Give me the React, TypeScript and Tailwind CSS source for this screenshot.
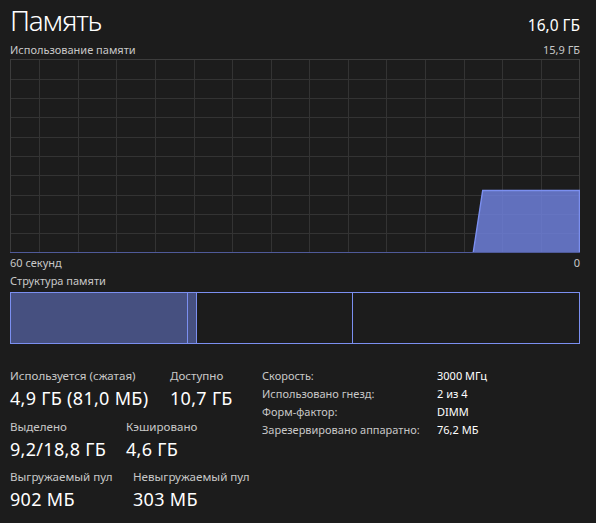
import React from "react";

const font = "font-['Noto_Sans',sans-serif]";

function Graph() {
  const w = 570;
  const h = 194;
  const hLines = Array.from({ length: 9 }, (_, i) => Math.round(0.5 + (i + 1) * 19.3) + 0.5);
  const vLines = Array.from({ length: 14 }, (_, i) => Math.round(29.3 + i * 38.57) + 0.5);
  return (
    <svg width={w} height={h} className="block">
      <rect x="0" y="0" width={w} height={h} fill="#1c1c1c" />
      {hLines.map((y) => (
        <line key={"h" + y} x1="0" x2={w} y1={y} y2={y} stroke="#333333" strokeWidth="1" />
      ))}
      {vLines.map((x) => (
        <line key={"v" + x} x1={x} x2={x} y1="0" y2={h} stroke="#333333" strokeWidth="1" />
      ))}
      <rect x="0.5" y="0.5" width={w - 1} height={h - 1} fill="none" stroke="#3c3c3c" strokeWidth="1" />
      <polygon points={`463.3,193 472.7,131 569.5,131 569.5,193`} fill="#7083e0" fillOpacity="0.82" />
      <line x1="0" x2={w} y1="193.5" y2="193.5" stroke="#4f5a99" strokeWidth="1" />
      <polyline points={`463.3,193 472.7,131.5 569.5,131.5 569.5,193`} fill="none" stroke="#7b8ff0" strokeWidth="1.4" />
    </svg>
  );
}

function Stat({ label, value, w }: { label: string; value: string; w: string }) {
  return (
    <div className={w}>
      <div className="text-[11.6px] leading-[12px] text-[#c8c8c8] whitespace-nowrap">{label}</div>
      <div className="text-[18px] leading-[18px] mt-[7px] text-white whitespace-nowrap tracking-[0.3px]">{value}</div>
    </div>
  );
}

export default function App() {
  const right = [
    ["Скорость:", "3000 МГц"],
    ["Использовано гнезд:", "2 из 4"],
    ["Форм-фактор:", "DIMM"],
    ["Зарезервировано аппаратно:", "76,2 МБ"],
  ];
  return (
    <div className={`w-[596px] h-[523px] bg-[#1c1c1c] text-white pl-[10px] pr-[16px] overflow-hidden ${font}`}>
      <div className="flex justify-between items-baseline pt-[6px]">
        <div className="text-[28px] leading-[28px] font-light tracking-[-1.2px]">Память</div>
        <div className="text-[15.5px] leading-[16px]">16,0 ГБ</div>
      </div>
      <div className="flex justify-between items-baseline mt-[10px] text-[11px] leading-[11px] text-[#c8c8c8]">
        <span>Использование памяти</span>
        <span>15,9 ГБ</span>
      </div>
      <div className="mt-[4px]">
        <Graph />
      </div>
      <div className="flex justify-between mt-[4px] text-[11px] leading-[11px] text-[#c8c8c8]">
        <span>60 секунд</span>
        <span>0</span>
      </div>
      <div className="mt-[7px] text-[11px] leading-[11px] text-[#c8c8c8]">Структура памяти</div>
      <div className="mt-[6px] w-[570px] h-[52px] border border-[#7b8ff0] flex">
        <div className="w-[177px] h-full bg-[#465080] border-r border-[#7b8ff0]" />
        <div className="w-[9px] h-full bg-[#465080] border-r border-[#7b8ff0]" />
        <div className="w-[156px] h-full border-r border-[#7b8ff0]" />
        <div className="flex-1 h-full" />
      </div>
      <div className="flex">
        <div className="w-[252px] pt-[26px] flex flex-col gap-[13.5px]">
          <div className="flex">
            <Stat w="w-[160px]" label="Используется (сжатая)" value="4,9 ГБ (81,0 МБ)" />
            <Stat w="" label="Доступно" value="10,7 ГБ" />
          </div>
          <div className="flex">
            <Stat w="w-[116px]" label="Выделено" value="9,2/18,8 ГБ" />
            <Stat w="" label="Кэшировано" value="4,6 ГБ" />
          </div>
          <div className="flex">
            <Stat w="w-[123px]" label="Выгружаемый пул" value="902 МБ" />
            <Stat w="" label="Невыгружаемый пул" value="303 МБ" />
          </div>
        </div>
        <div className="pt-[23px] text-[11px] leading-[18px]">
          {right.map(([l, v]) => (
            <div key={l} className="flex">
              <div className="w-[175px] text-[#c8c8c8] whitespace-nowrap">{l}</div>
              <div className="text-white whitespace-nowrap">{v}</div>
            </div>
          ))}
        </div>
      </div>
    </div>
  );
}
